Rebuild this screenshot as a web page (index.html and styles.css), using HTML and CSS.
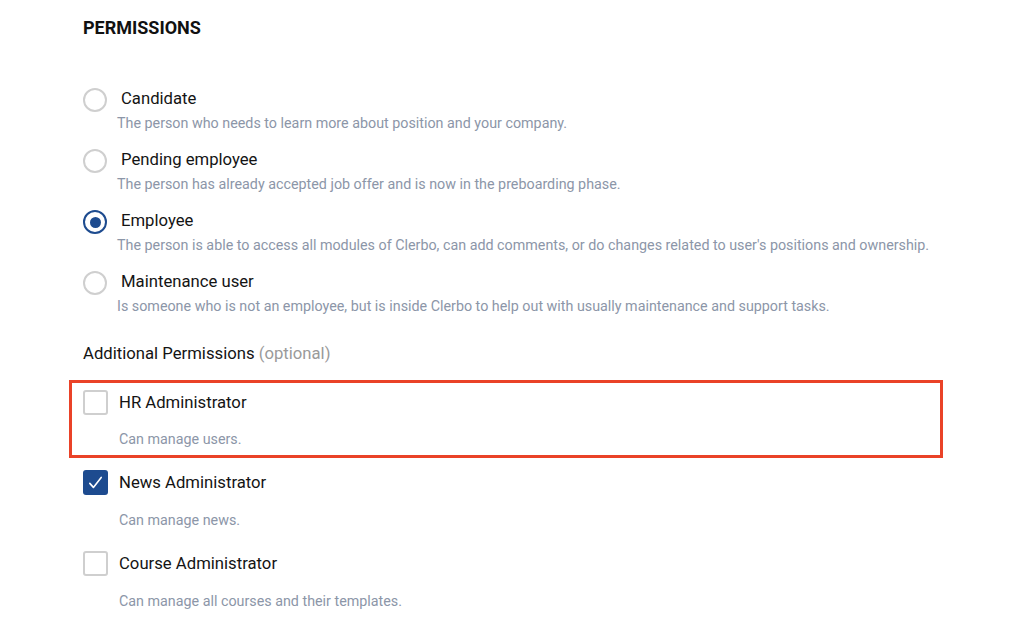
FILE: index.html
```html
<!DOCTYPE html>
<html>
<head>
<meta charset="utf-8">
<link rel="stylesheet" href="styles.css">
</head>
<body>
<div class="page">
  <h2 class="title">PERMISSIONS</h2>

  <div class="radios">
    <div class="radio-item">
      <div class="radio-row"><span class="radio"></span><span class="label">Candidate</span></div>
      <div class="radio-desc">The person who needs to learn more about position and your company.</div>
    </div>
    <div class="radio-item">
      <div class="radio-row"><span class="radio"></span><span class="label">Pending employee</span></div>
      <div class="radio-desc">The person has already accepted job offer and is now in the preboarding phase.</div>
    </div>
    <div class="radio-item">
      <div class="radio-row"><span class="radio selected"></span><span class="label">Employee</span></div>
      <div class="radio-desc">The person is able to access all modules of Clerbo, can add comments, or do changes related to user's positions and ownership.</div>
    </div>
    <div class="radio-item">
      <div class="radio-row"><span class="radio"></span><span class="label">Maintenance user</span></div>
      <div class="radio-desc">Is someone who is not an employee, but is inside Clerbo to help out with usually maintenance and support tasks.</div>
    </div>
  </div>

  <div class="subtitle">Additional Permissions <span class="optional">(optional)</span></div>

  <div class="checks">
    <div class="check-item highlight">
      <div class="check-row"><span class="box"></span><span class="label">HR Administrator</span></div>
      <div class="check-desc">Can manage users.</div>
    </div>
    <div class="check-item">
      <div class="check-row"><span class="box checked"><svg viewBox="0 0 25 25" width="25" height="25"><path d="M6.8 13.4 L10.4 17.4 L18.2 7.4" fill="none" stroke="#fff" stroke-width="1.6" stroke-linecap="round" stroke-linejoin="round"/></svg></span><span class="label">News Administrator</span></div>
      <div class="check-desc">Can manage news.</div>
    </div>
    <div class="check-item">
      <div class="check-row"><span class="box"></span><span class="label">Course Administrator</span></div>
      <div class="check-desc">Can manage all courses and their templates.</div>
    </div>
  </div>
</div>
</body>
</html>
```

FILE: styles.css
```css
* { box-sizing: border-box; }
html, body { margin: 0; padding: 0; background: #fff; }
body {
  font-family: Roboto, "Liberation Sans", Arial, sans-serif;
  color: #1b1b1b;
  width: 1024px;
  height: 617px;
  overflow: hidden;
}
.page {
  padding: 16px 0 0 83px;
}
.title {
  margin: 0;
  font-size: 18px;
  font-weight: 700;
  line-height: 24px;
  color: #111;
}
.radios {
  margin-top: 47px;
  display: flex;
  flex-direction: column;
  gap: 14px;
}
.radio-row {
  display: flex;
  align-items: flex-start;
}
.radio {
  width: 24px;
  height: 24px;
  margin-top: 1px;
  border: 2px solid #cfcfcf;
  border-radius: 50%;
  flex: none;
  display: flex;
  align-items: center;
  justify-content: center;
}
.radio.selected {
  border-color: #1d4b8f;
}
.radio.selected::after {
  content: "";
  width: 11px;
  height: 11px;
  border-radius: 50%;
  background: #1d4b8f;
}
.label {
  font-size: 16.7px;
  line-height: 24px;
  color: #141414;
}
.radio-row .label { margin-left: 14px; }
.radio-desc {
  padding-left: 34px;
  font-size: 14.3px;
  line-height: 22px;
  color: #8c96a8;
}
.subtitle {
  margin-top: 25px;
  font-size: 16.7px;
  line-height: 24px;
  color: #141414;
}
.optional { color: #9a9a9a; }
.checks {
  margin-top: 14px;
  display: flex;
  flex-direction: column;
  gap: 21px;
}
.check-item.highlight {
  margin: 0 0 -9px -14px;
  width: 874px;
  border: 3px solid #ea4228;
  padding: 7px 0 6px 11px;
}
.check-row {
  display: flex;
  align-items: flex-start;
}
.box {
  width: 25px;
  height: 25px;
  border: 2px solid #cfcfcf;
  border-radius: 3px;
  flex: none;
  display: block;
}
.box.checked {
  border: none;
  background: #1d4b8f;
}
.box svg { display: block; }
.check-row .label { margin-left: 11px; padding-top: 1px; }
.check-desc {
  margin-top: 14px;
  padding-left: 36px;
  font-size: 14.3px;
  line-height: 20px;
  color: #8c96a8;
}
.check-item:not(.highlight) .check-desc { margin-top: 15px; }
```
